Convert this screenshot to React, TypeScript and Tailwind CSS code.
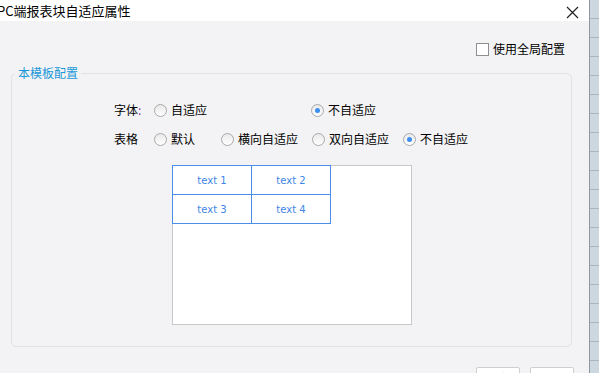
import React from 'react';

const cjk = { fontFamily: '"Noto Sans CJK SC", "Noto Sans", sans-serif' };

const Radio: React.FC<{ checked?: boolean }> = ({ checked }) => (
  <span className="w-[13px] h-[13px] rounded-full border border-[#a9a9a9] bg-gradient-to-b from-[#e9e9e9] to-white flex items-center justify-center shrink-0">
    {checked && <span className="w-[5px] h-[5px] rounded-full bg-[#3d8ef0]" />}
  </span>
);

const Option: React.FC<{ label: string; checked?: boolean; w: string }> = ({ label, checked, w }) => (
  <div className={`flex items-center gap-[4px] ${w}`}>
    <Radio checked={checked} />
    <span>{label}</span>
  </div>
);

const cells = ['text 1', 'text 2', 'text 3', 'text 4'];

export default function App() {
  return (
    <div className="w-[599px] h-[373px] flex overflow-hidden text-[12px] text-black bg-[#f3f3f5]" style={cjk}>
      <div className="w-[589px] flex flex-col">
        {/* title bar */}
        <div className="h-[21px] bg-white flex items-center justify-between shrink-0">
          <span className="text-[13px] -ml-[3px] leading-none">PC端报表块自适应属性</span>
          <svg width="13" height="13" viewBox="0 0 13 13" className="mr-[10px] mt-[3px]">
            <path d="M1 1L12 12M12 1L1 12" stroke="#222" strokeWidth="1.2" />
          </svg>
        </div>

        <div className="flex-1 flex flex-col">
          <div className="flex justify-end items-center gap-[4px] pr-[24px] pt-[21px] h-[35px]">
            <span className="w-[13px] h-[13px] border border-[#8f8f8f] bg-white" />
            <span>使用全局配置</span>
          </div>

          <div className="relative ml-[11px] mr-[17px] mt-[17px] h-[274px] border border-[#e2e2e6] rounded-[5px] pl-[102px] pt-[26px]">
            <span className="absolute -top-[9px] left-[3px] px-[3px] bg-[#f3f3f5] text-[#1a98d8] leading-[16px]">本模板配置</span>

            <div className="flex items-center h-[20px]">
              <span className="w-[40px]">字体<span className="text-[#8a3a9a]">:</span></span>
              <Option label="自适应" w="w-[157px]" />
              <Option label="不自适应" checked w="w-[100px]" />
            </div>
            <div className="flex items-center h-[20px] mt-[9px]">
              <span className="w-[40px]">表格</span>
              <Option label="默认" w="w-[67px]" />
              <Option label="横向自适应" w="w-[91px]" />
              <Option label="双向自适应" w="w-[91px]" />
              <Option label="不自适应" checked w="w-[90px]" />
            </div>

            <div className="ml-[58px] mt-[16px] w-[240px] h-[160px] border border-[#c8c8c8] bg-white">
              <div className="-m-px grid grid-cols-[79px_79px] w-[159px] border-r border-b border-[#4a8ee8]" style={{ fontFamily: '"DejaVu Sans", sans-serif' }}>
                {cells.map((c) => (
                  <div key={c} className="h-[29px] border-l border-t border-[#4a8ee8] flex items-center justify-center text-[10px] text-[#3f86e6]">
                    {c}
                  </div>
                ))}
              </div>
            </div>
          </div>

          <div className="flex justify-end gap-[10px] pr-[15px] mt-[20px]">
            <button className="w-[44px] h-[24px] bg-white border border-[#cfcfcf] rounded-[2px] leading-[22px]">确定</button>
            <button className="w-[44px] h-[24px] bg-white border border-[#cfcfcf] rounded-[2px] leading-[22px]">取消</button>
          </div>
        </div>
      </div>

      {/* spreadsheet behind the dialog */}
      <div className="w-[10px] flex flex-col bg-[#cdd7df] border-l border-[#8e979f]">
        {Array.from({ length: 20 }).map((_, i) => (
          <div key={i} className="h-[19px] border-b border-[#aab5bf] shrink-0" />
        ))}
      </div>
    </div>
  );
}
